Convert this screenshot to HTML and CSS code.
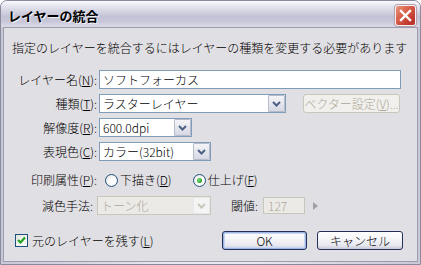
FILE: index.html
```html
<!DOCTYPE html>
<html lang="ja">
<head>
<meta charset="utf-8">
<link rel="stylesheet" href="styles.css">
</head>
<body>
<div class="window">
  <div class="titlebar">
    <span class="title">レイヤーの統合</span>
    <span class="close">
      <svg width="21" height="21" viewBox="0 0 21 21">
        <path d="M6 6 L15 15 M15 6 L6 15" stroke="#fff" stroke-width="2.4" stroke-linecap="square"/>
      </svg>
    </span>
  </div>
  <div class="client">
    <p class="msg">指定のレイヤーを統合するにはレイヤーの種類を変更する必要があります</p>

    <div class="row r-name">
      <span class="lbl">レイヤー名(<u>N</u>):</span>
      <div class="input w-name">ソフトフォーカス</div>
    </div>

    <div class="row">
      <span class="lbl">種類(<u>T</u>):</span>
      <div class="combo w-kind"><span class="val">ラスターレイヤー</span><span class="dd"><svg width="9" height="6" viewBox="0 0 9 6"><path d="M1 1 L4.5 4.5 L8 1" fill="none" stroke="#4d6185" stroke-width="2"/></svg></span></div>
      <div class="btn disabled vec">ベクター設定(<u>V</u>)...</div>
    </div>

    <div class="row">
      <span class="lbl">解像度(<u>R</u>):</span>
      <div class="combo w-res"><span class="val">600.0dpi</span><span class="dd"><svg width="9" height="6" viewBox="0 0 9 6"><path d="M1 1 L4.5 4.5 L8 1" fill="none" stroke="#4d6185" stroke-width="2"/></svg></span></div>
    </div>

    <div class="row">
      <span class="lbl">表現色(<u>C</u>):</span>
      <div class="combo w-color"><span class="val">カラー(32bit)</span><span class="dd"><svg width="9" height="6" viewBox="0 0 9 6"><path d="M1 1 L4.5 4.5 L8 1" fill="none" stroke="#4d6185" stroke-width="2"/></svg></span></div>
    </div>

    <div class="row r-print">
      <span class="lbl">印刷属性(<u>P</u>):</span>
      <span class="radio"></span><span class="rtext">下描き(<u>D</u>)</span>
      <span class="radio checked r2"></span><span class="rtext">仕上げ(<u>F</u>)</span>
    </div>

    <div class="row r-reduce">
      <span class="lbl lbl-dis">減色手法:</span>
      <div class="combo disabled w-reduce"><span class="val">トーン化</span><span class="dd"><svg width="9" height="6" viewBox="0 0 9 6"><path d="M1 1 L4.5 4.5 L8 1" fill="none" stroke="#c9c7ba" stroke-width="2"/></svg></span></div>
      <span class="thlbl">閾値:</span>
      <div class="input disabled w-th">127</div>
      <span class="arrow"></span>
    </div>

    <div class="footer">
      <span class="check"><svg width="11" height="11" viewBox="0 0 11 11"><path d="M2 5 L4.5 7.5 L9 2.5" fill="none" stroke="#21a121" stroke-width="2.2"/></svg></span>
      <span class="ctext">元のレイヤーを残す(<u>L</u>)</span>
      <div class="btn push default">OK</div>
      <div class="btn push cancel">キャンセル</div>
    </div>
  </div>
</div>
</body>
</html>
```

FILE: styles.css
```css
html, body {
  margin: 0;
  padding: 0;
  background: #ffffff;
}

.window {
  width: 421px;
  height: 265px;
  box-sizing: border-box;
  border: 1px solid #8a8a9e;
  border-radius: 7px 7px 0 0;
  background: linear-gradient(90deg, #c8c8d6, #e8e8f0 40%, #e8e8f0 60%, #c8c8d6);
  padding: 0 2px 2px;
  overflow: hidden;
  font-family: "Noto Sans CJK JP", "Noto Sans", sans-serif;
  font-weight: 300;
  font-size: 12px;
  color: #000;
  display: flex;
  flex-direction: column;
}

.titlebar {
  height: 26px;
  margin: 0 -2px;
  display: flex;
  align-items: flex-start;
  justify-content: space-between;
  padding: 0 4px 0 7px;
  background: linear-gradient(#fbfbfd 0%, #e9e9f1 15%, #d4d4e2 40%, #c2c2d6 60%, #c8c8da 80%, #dcdce6 100%);
}

.title {
  font-weight: bold;
  font-size: 13px;
  line-height: 14px;
  margin-top: 8px;
  color: #000;
  text-shadow: 1px 1px 0 rgba(255,255,255,0.8);
}

.close {
  width: 21px;
  height: 21px;
  margin-top: 4px;
  box-sizing: border-box;
  border: 1px solid #f0f0f6;
  border-radius: 3px;
  background: linear-gradient(135deg, #e8957b 0%, #d9604a 40%, #c23a2e 75%, #b53026 100%);
  box-shadow: 0 0 0 1px #b9a0a8;
  display: flex;
  align-items: center;
  justify-content: center;
}
.close svg { display: block; margin: -1px; }

.client {
  flex: 1;
  background: #e0dfe3;
  border: 1px solid #9c9cb0;
  padding: 12px 0 0 8px;
}

.msg {
  margin: 0;
  line-height: 16px;
  white-space: nowrap;
}

u { text-decoration: underline; text-underline-offset: 1px; }

.row {
  display: flex;
  align-items: center;
  height: 19px;
  margin-top: 5px;
  white-space: nowrap;
}
.r-name { margin-top: 14px; }
.r-print { margin-top: 11px; height: 16px; }
.r-reduce { margin-top: 8px; }

.lbl {
  width: 85px;
  text-align: right;
  margin-right: 2px;
  line-height: 16px;
}
.lbl-dis {
  width: 81px;
  margin-right: 4px;
}

.input, .combo {
  height: 19px;
  box-sizing: border-box;
  border: 1px solid #7f9db9;
  background: #fff;
  line-height: 17px;
}
.input { padding-left: 3px; }
.w-name { width: 302px; }

.combo {
  display: flex;
  align-items: center;
  justify-content: space-between;
  padding: 0 1px 0 3px;
}
.w-kind { width: 187px; }
.w-res { width: 93px; }
.w-color { width: 112px; }
.w-reduce { width: 114px; }

.dd {
  width: 17px;
  height: 17px;
  box-sizing: border-box;
  border: 1px solid #b6bccc;
  border-radius: 1px;
  background: linear-gradient(#f4f4f8, #d8d8e4);
  display: flex;
  align-items: center;
  justify-content: center;
  margin-right: -1px;
}
.dd svg { display: block; }

.combo.disabled, .input.disabled {
  border-color: #c9c7ba;
  background: #ebeae6;
  color: #aca899;
}
.combo.disabled .dd {
  border-color: #e8e8ec;
  background: #f4f4f4;
}

.btn {
  box-sizing: border-box;
  height: 19px;
  display: flex;
  align-items: center;
  justify-content: center;
  border-radius: 3px;
}
.vec {
  width: 97px;
  margin-left: 17px;
  border: 1px solid #c9c7ba;
  background: #f1f0ec;
  color: #aca899;
}

.radio {
  width: 13px;
  height: 13px;
  box-sizing: border-box;
  border: 1px solid #1c5180;
  border-radius: 50%;
  background: radial-gradient(circle at 60% 60%, #ffffff 30%, #dcdcd8 100%);
  margin-left: 6px;
  margin-right: 2px;
  position: relative;
}
.radio.checked::after {
  content: "";
  position: absolute;
  left: 3px;
  top: 3px;
  width: 5px;
  height: 5px;
  border-radius: 50%;
  background: radial-gradient(circle at 40% 40%, #7ae07a, #21a121 70%);
}
.radio.r2 { margin-left: 21px; }
.rtext { line-height: 16px; }

.thlbl { margin-left: 20px; margin-right: 5px; }
.w-th { width: 42px; height: 17px; line-height: 15px; padding-left: 4px; }
.arrow {
  width: 0;
  height: 0;
  border-top: 4px solid transparent;
  border-bottom: 4px solid transparent;
  border-left: 5px solid #a0a0a8;
  margin-left: 8px;
}

.footer {
  display: flex;
  align-items: center;
  height: 19px;
  margin-top: 16px;
  padding-left: 3px;
  white-space: nowrap;
}
.check {
  width: 13px;
  height: 13px;
  box-sizing: border-box;
  border: 1px solid #1c5180;
  background: linear-gradient(135deg, #e4e4de, #fff);
  display: flex;
  align-items: center;
  justify-content: center;
  margin-right: 4px;
}
.check svg { display: block; }
.ctext { line-height: 16px; }

.push {
  width: 85px;
  border: 1px solid #233059;
  background: linear-gradient(#ffffff 0%, #f6f6f9 40%, #e6e6ee 80%, #c8c8d8 100%);
}
.default {
  margin-left: auto;
  box-shadow: inset 0 0 0 1px #9fb4e0, inset 0 0 0 2px #c7d6f2;
}
.cancel {
  width: 86px;
  margin-left: 10px;
  margin-right: 14px;
}
```
